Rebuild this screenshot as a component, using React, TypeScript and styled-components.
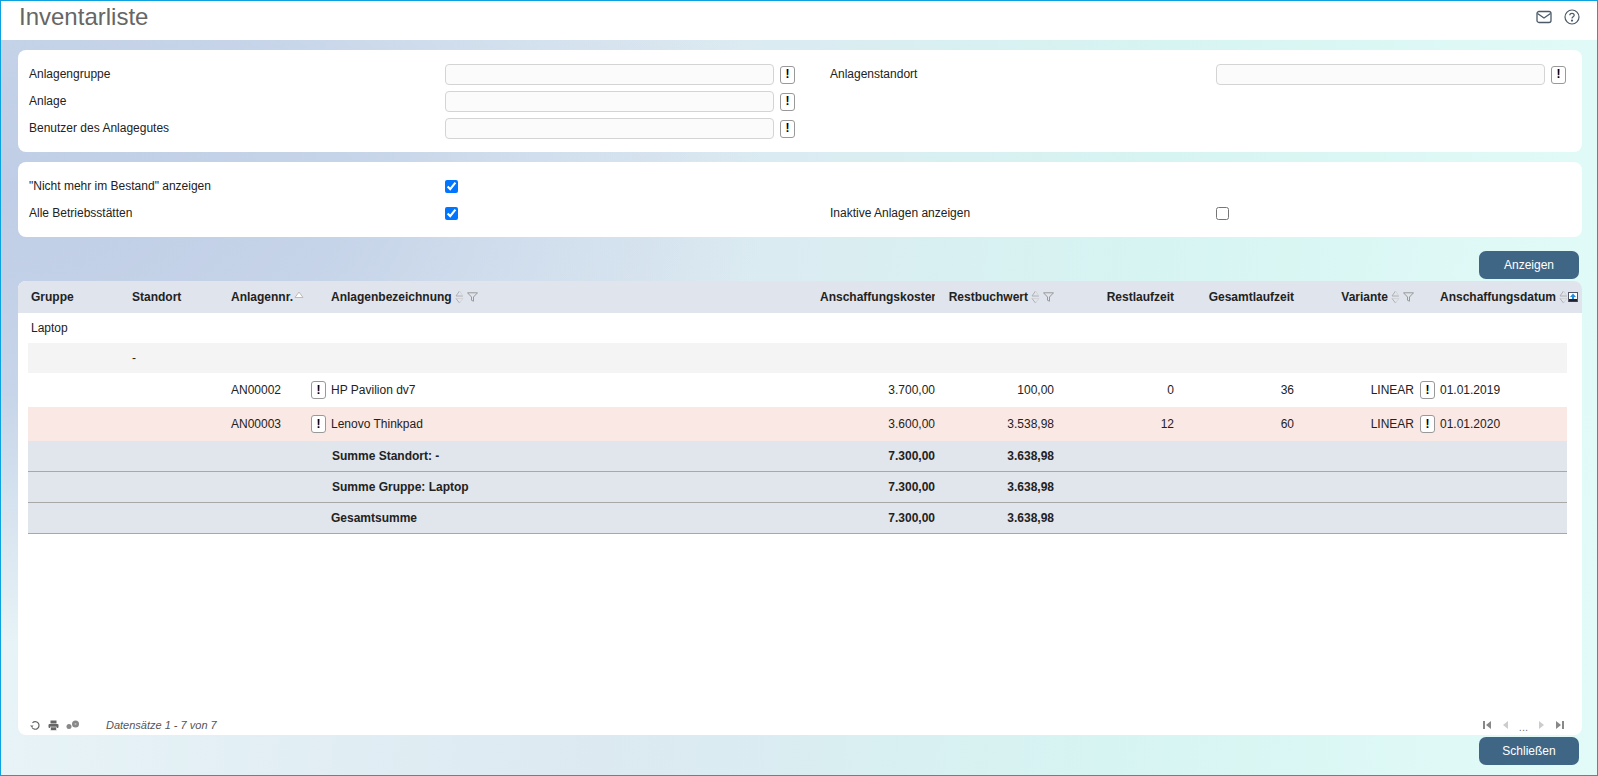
import React from "react";
import styled, { createGlobalStyle } from "styled-components";

const Global = createGlobalStyle`
  html, body { margin: 0; padding: 0; height: 100%; }
  body { font-family: "Liberation Sans", Arial, sans-serif; font-size: 12px; color: #222; overflow: hidden; }
  * { box-sizing: border-box; }
`;

const Frame = styled.div`
  width: 1598px; height: 776px; border: 1px solid #0ea1e0; display: flex; flex-direction: column; overflow: hidden;
`;
const Header = styled.header`
  height: 39px; flex: none; background: #fff; display: flex; align-items: center; justify-content: space-between; padding: 0 17px 8px 18px;
`;
const Title = styled.h1`
  margin: 0; font-size: 24px; font-weight: 400; color: #666;
`;
const HeaderIcons = styled.div`
  display: flex; gap: 12px; align-items: center; color: #4a5a68; padding-top: 1px;
`;
const Main = styled.main`
  flex: 1; padding: 10px 15px 0 17px; display: flex; flex-direction: column;
  background:
    radial-gradient(ellipse 48% 62% at 0% 20%, #bfcde6 0%, rgba(191,205,230,0.8) 45%, rgba(191,205,230,0) 100%),
    linear-gradient(95deg, #e8f4f7 0%, #dce9f1 40%, #d6f4f2 70%, #e2fbf8 100%);
`;
const Panel = styled.section`
  background: #fff; border-radius: 8px; padding: 14px 11px 13px; display: grid;
  grid-template-columns: 416px 385px 386px 1fr; grid-auto-rows: 21px; row-gap: 6px; align-items: center; margin-bottom: 10px;
`;
const Label = styled.label`
  color: #222; margin-bottom: 2px;
`;
const InputGroup = styled.div`
  display: flex; align-items: center; gap: 6px;
`;
const TextInput = styled.input`
  width: 329px; height: 21px; background: #fbfbfb; border: 1px solid #d4d4d4; border-radius: 4px; padding: 0; outline: none;
`;
const InfoButton = styled.button`
  width: 15px; height: 18px; flex: none; padding: 0; border: 1px solid #999; border-radius: 3px; background: #fff; color: #000;
  font: 700 12px "Liberation Sans", Arial, sans-serif; line-height: 15px;
`;
const Check = styled.input`
  width: 13px; height: 13px; margin: 0; accent-color: #0075ff; justify-self: start;
`;
const ActionRow = styled.div`
  display: flex; justify-content: flex-end; padding: 4px 3px 2px 0;
`;
const ActionButton = styled.button`
  width: 100px; height: 28px; border: none; border-radius: 7px; background: #3f6684; color: #fff;
  font: 400 12px "Liberation Sans", Arial, sans-serif;
`;
const TablePanel = styled.section`
  height: 454px; flex: none; background: #fff; border-radius: 8px; display: flex; flex-direction: column; overflow: hidden;
`;
const columns = "101px 99px 80px 20px 492px 115px 119px 120px 120px 120px 23px 1fr";
const HeadRow = styled.div`
  height: 32px; flex: none; background: #e0e4ec; padding: 0 3px 0 10px; display: grid; grid-template-columns: ${columns}; align-items: center;
`;
const HeadCell = styled.div<{ $span?: number; $end?: boolean; $clip?: boolean }>`
  grid-column: span ${p => p.$span ?? 1};
  padding-left: ${p => (p.$clip || p.$end ? 0 : 3)}px;
  font-weight: 700; color: #222; white-space: nowrap; display: flex; align-items: center;
  justify-content: ${p => (p.$end ? "flex-end" : "flex-start")};
  overflow: ${p => (p.$clip ? "hidden" : "visible")};
`;
const Body = styled.div`
  flex: 1; padding: 0 15px 0 10px; display: flex; flex-direction: column;
`;
const Row = styled.div<{ $h: number; $bg?: string; $line?: boolean }>`
  height: ${p => p.$h}px; flex: none; display: grid; grid-template-columns: ${columns}; align-items: center;
  background: ${p => p.$bg ?? "transparent"};
  border-bottom: ${p => (p.$line ? "1px solid #a8a8a8" : "none")};
`;
const Cell = styled.div<{ $right?: boolean; $bold?: boolean; $col?: number; $pad?: number }>`
  ${p => (p.$col ? `grid-column: ${p.$col};` : "")}
  text-align: ${p => (p.$right ? "right" : "left")};
  font-weight: ${p => (p.$bold ? 700 : 400)};
  padding-left: ${p => p.$pad ?? (p.$right ? 0 : 3)}px;
  white-space: nowrap; color: #222;
`;
const ButtonCell = styled.div<{ $col: number; $pad: number }>`
  grid-column: ${p => p.$col}; display: flex; justify-content: flex-start; padding-left: ${p => p.$pad}px;
`;
const Footer = styled.footer`
  height: 26px; flex: none; display: flex; align-items: center; justify-content: space-between; padding: 6px 18px 0 12px; color: #777;
`;
const FooterLeft = styled.div`
  display: flex; align-items: center; gap: 7px;
`;
const Records = styled.span`
  font-style: italic; font-size: 11px; color: #555; margin-left: 20px;
`;
const Pager = styled.div`
  display: flex; align-items: center; gap: 9px; color: #999;
`;
const Dots = styled.span`
  font-size: 11px; color: #777; line-height: 12px; padding-top: 3px;
`;
const CloseRow = styled.div`
  display: flex; justify-content: flex-end; padding: 2px 3px 0 0;
`;

const Sort = () => (
  <svg width="9" height="14" viewBox="0 0 9 14" style={{ marginLeft: 3, flex: "none" }} fill="none" strokeWidth="1">
    <path d="M4.500 1 1 6h7" stroke="#aeb0b3" />
    <path d="M4.500 1 8 6" stroke="#d2d4d8" />
    <path d="M1 8.500h7L4.500 13" stroke="#d2d4d8" />
    <path d="M1 8.500 4.500 13" stroke="#aeb0b3" />
  </svg>
);
const SortUp = () => (
  <svg width="10" height="8" viewBox="0 0 10 8" style={{ marginLeft: 1, marginBottom: 5 }}>
    <path d="M5 1 1 6.500h8z" fill="#fff" stroke="#bbb" />
  </svg>
);
const Filter = () => (
  <svg width="11" height="10" viewBox="0 0 11 10" style={{ marginLeft: 3, flex: "none" }}>
    <path d="M.5.800h10L6.500 5v4.200L4.500 8.300V5z" fill="none" stroke="#999" />
  </svg>
);
const ExportIcon = () => (
  <svg width="10" height="10" viewBox="0 0 10 10" style={{ flex: "none" }}>
    <rect x=".5" y=".5" width="9" height="9" fill="#fff" stroke="#556" />
    <rect x="1" y="7" width="8" height="2.500" fill="#223" />
    <path d="M5 1.500 8 5H6v2H4V5H2z" fill="#1f8fe0" />
  </svg>
);
const Mail = () => (
  <svg width="16" height="14" viewBox="0 0 16 14" fill="none" stroke="currentColor" strokeWidth="1.300">
    <rect x="1" y="1.500" width="14" height="11" rx="2" />
    <path d="M1.500 3.500 8 8l6.500-4.500" />
  </svg>
);
const Help = () => (
  <svg width="16" height="16" viewBox="0 0 16 16" fill="none" stroke="currentColor" strokeWidth="1.200">
    <circle cx="8" cy="8" r="7" />
    <path d="M5.800 6.200C5.800 5 6.800 4.300 8 4.300s2.200.8 2.200 1.900c0 1.700-2.200 1.600-2.200 3.400" />
    <circle cx="8" cy="11.600" r=".5" fill="currentColor" />
  </svg>
);
const Refresh = () => (
  <svg width="11" height="11" viewBox="0 0 11 11" fill="none" stroke="#666" strokeWidth="1.200">
    <path d="M2.500 2.800A3.800 3.800 0 1 1 2 7.500" />
    <path d="M0 5.500h3.500L2 7.500z" fill="#666" stroke="none" />
  </svg>
);
const Printer = () => (
  <svg width="11" height="11" viewBox="0 0 11 11" fill="#666">
    <rect x="2.500" y=".5" width="6" height="3" />
    <rect x=".5" y="4" width="10" height="4" rx="1" />
    <rect x="2.500" y="7" width="6" height="3.500" stroke="#fff" strokeWidth=".6" />
  </svg>
);
const Gears = () => (
  <svg width="13" height="10" viewBox="0 0 13 10" fill="#888">
    <circle cx="3" cy="6.500" r="2.500" />
    <circle cx="9.500" cy="4" r="3.500" />
    <circle cx="9.500" cy="4" r="1" fill="#bbb" />
  </svg>
);
const PageIcon = ({ d, c }: { d: string; c: string }) => (
  <svg width="9" height="8" viewBox="0 0 9 8" fill={c}><path d={d} /></svg>
);

const Field = ({ label }: { label: string }) => (
  <>
    <Label>{label}</Label>
    <InputGroup><TextInput readOnly /><InfoButton>!</InfoButton></InputGroup>
  </>
);

type Item = { no: string; name: string; cost: string; book: string; rest: string; total: string; date: string; bg?: string };
const items: Item[] = [
  { no: "AN00002", name: "HP Pavilion dv7", cost: "3.700,00", book: "100,00", rest: "0", total: "36", date: "01.01.2019" },
  { no: "AN00003", name: "Lenovo Thinkpad", cost: "3.600,00", book: "3.538,98", rest: "12", total: "60", date: "01.01.2020", bg: "#fae8e5" },
];
const sums = [
  { label: "Summe Standort: -", pad: 4 },
  { label: "Summe Gruppe: Laptop", pad: 4 },
  { label: "Gesamtsumme", pad: 3 },
];

export default function App() {
  return (
    <Frame>
      <Global />
      <Header>
        <Title>Inventarliste</Title>
        <HeaderIcons><Mail /><Help /></HeaderIcons>
      </Header>
      <Main>
        <Panel>
          <Field label="Anlagengruppe" />
          <Field label="Anlagenstandort" />
          <Field label="Anlage" />
          <span /><span />
          <Field label="Benutzer des Anlagegutes" />
        </Panel>
        <Panel>
          <Label>"Nicht mehr im Bestand" anzeigen</Label>
          <Check type="checkbox" defaultChecked />
          <span /><span />
          <Label>Alle Betriebsstätten</Label>
          <Check type="checkbox" defaultChecked />
          <Label>Inaktive Anlagen anzeigen</Label>
          <Check type="checkbox" />
        </Panel>
        <ActionRow><ActionButton>Anzeigen</ActionButton></ActionRow>
        <TablePanel>
          <HeadRow>
            <HeadCell>Gruppe</HeadCell>
            <HeadCell>Standort</HeadCell>
            <HeadCell $span={2}>Anlagennr.<SortUp /></HeadCell>
            <HeadCell>Anlagenbezeichnung<Sort /><Filter /></HeadCell>
            <HeadCell $clip>Anschaffungskosten</HeadCell>
            <HeadCell $end>Restbuchwert<Sort /><Filter /></HeadCell>
            <HeadCell $end>Restlaufzeit</HeadCell>
            <HeadCell $end>Gesamtlaufzeit</HeadCell>
            <HeadCell $end>Variante<Sort /><Filter /></HeadCell>
            <span />
            <HeadCell>Anschaffungsdatum<Sort /><ExportIcon /></HeadCell>
          </HeadRow>
          <Body>
            <Row $h={30}><Cell>Laptop</Cell></Row>
            <Row $h={30} $bg="#f4f4f4"><Cell $col={2}>-</Cell></Row>
            {items.map(i => (
              <Row key={i.no} $h={34} $bg={i.bg}>
                <Cell $col={3}>{i.no}</Cell>
                <ButtonCell $col={4} $pad={3}><InfoButton>!</InfoButton></ButtonCell>
                <Cell>{i.name}</Cell>
                <Cell $right>{i.cost}</Cell>
                <Cell $right>{i.book}</Cell>
                <Cell $right>{i.rest}</Cell>
                <Cell $right>{i.total}</Cell>
                <Cell $right>LINEAR</Cell>
                <ButtonCell $col={11} $pad={6}><InfoButton>!</InfoButton></ButtonCell>
                <Cell>{i.date}</Cell>
              </Row>
            ))}
            {sums.map(s => (
              <Row key={s.label} $h={31} $bg="#e1e5ec" $line>
                <Cell $col={5} $bold $pad={s.pad}>{s.label}</Cell>
                <Cell $right $bold>7.300,00</Cell>
                <Cell $right $bold>3.638,98</Cell>
              </Row>
            ))}
          </Body>
          <Footer>
            <FooterLeft>
              <Refresh /><Printer /><Gears />
              <Records>Datensätze 1 - 7 von 7</Records>
            </FooterLeft>
            <Pager>
              <PageIcon c="#888" d="M0 0h2v8H0zM8 0v8L3 4z" />
              <PageIcon c="#ccc" d="M7 0v8L2 4z" />
              <Dots>...</Dots>
              <PageIcon c="#ccc" d="M2 0v8l5-4z" />
              <PageIcon c="#888" d="M1 0v8l5-4zM7 0h2v8H7z" />
            </Pager>
          </Footer>
        </TablePanel>
        <CloseRow><ActionButton>Schließen</ActionButton></CloseRow>
      </Main>
    </Frame>
  );
}
